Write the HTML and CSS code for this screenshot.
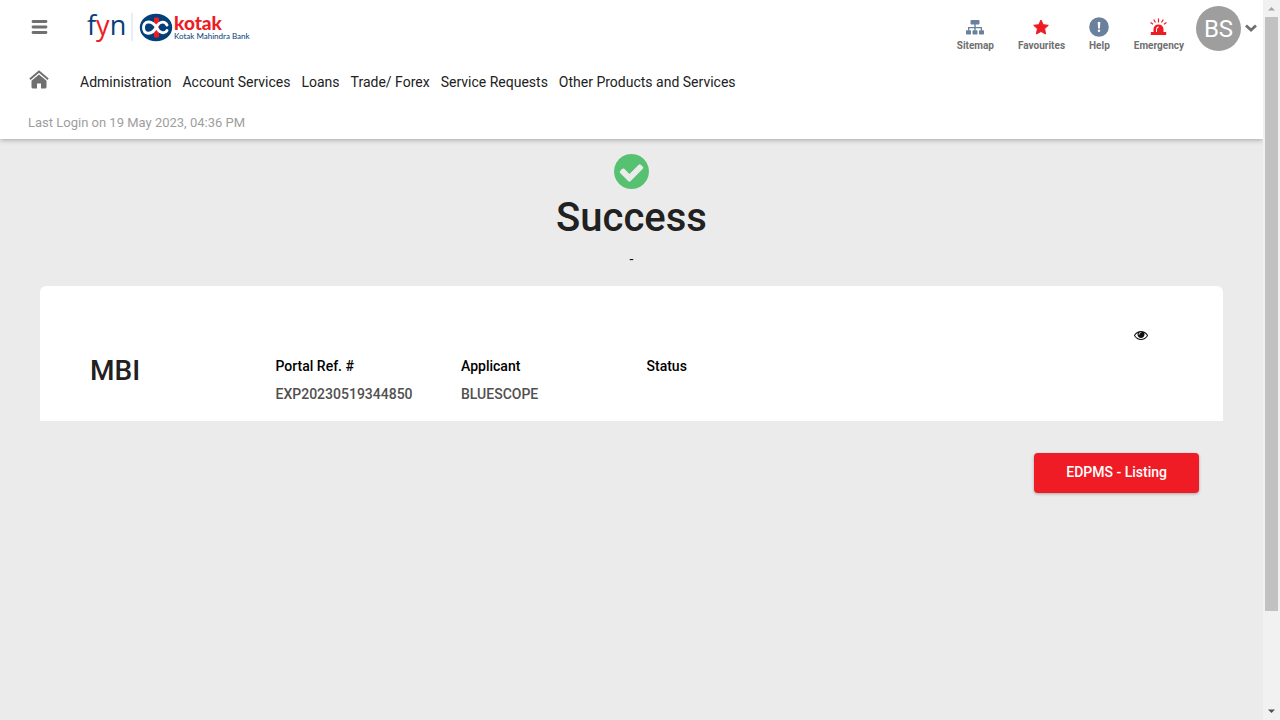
FILE: index.html
```html
<!DOCTYPE html>
<html lang="en">
<head>
<meta charset="utf-8">
<meta name="viewport" content="width=device-width, initial-scale=1">
<title>Success - EDPMS</title>
<link rel="stylesheet" href="styles.css">
</head>
<body>
<div class="shell">
  <div class="page">
    <header class="header">
      <div class="topbar">
        <button class="icon-button menu" type="button" aria-label="Menu">
          <svg width="17" height="14" viewBox="0 0 17 14" stroke="#707070" stroke-width="2.8" stroke-linecap="round"><path d="M2 1.500h13M2 7h13M2 12.500h13"/></svg>
        </button>
        <a class="brand" href="#" aria-label="fyn Kotak Mahindra Bank">
          <svg width="172" height="43" viewBox="0 -3 172 43">
            <text class="fyn" x="0" y="27">f<tspan class="red">y</tspan>n</text>
            <path d="M45 5v28" stroke="#d5d9e8" stroke-width="1"/>
            <ellipse cx="69" cy="19.500" rx="16.200" ry="13.800" fill="#03407a"/>
            <path d="M67 10q2.500-1.500 5 0v19q-2.500 1.500-5 0z" fill="#ed1c24"/>
            <path d="M80 17C78 13 73 13 70 18C67 24 64 25.500 61 25.300C55 24.500 55 14.500 61 14C65 13.500 67.500 16 70 20C72.500 25.500 78 26 80 22.500" fill="none" stroke="#fff" stroke-width="2.900" stroke-linecap="round"/>
            <text class="kotak" x="87" y="22">kotak</text>
            <text class="bank" x="87" y="31">Kotak Mahindra Bank</text>
          </svg>
        </a>
        <div class="tools">
          <a class="tool" href="#">
            <svg width="18" height="20" viewBox="0 0 18 20" fill="#6a819d"><rect x="4.500" y="3" width="9" height="4.500" rx="1"/><path d="M8.300 7h1.400v3H16v3.500h-1.300v-2.200h-5v2.200H8.300v-2.200h-5v2.200H2V10h6.300z"/><rect x="0" y="13.200" width="5" height="4.300" rx=".7"/><rect x="6.500" y="13.200" width="5" height="4.300" rx=".7"/><rect x="13" y="13.200" width="5" height="4.300" rx=".7"/></svg>
            <span>Sitemap</span>
          </a>
          <a class="tool" href="#">
            <svg width="18" height="20" viewBox="0 0 18 20" fill="#ed1c24" stroke="#ed1c24" stroke-linejoin="round"><path d="M9 3l2.200 4.700 5.100.6-3.700 3.500 1 5.200L9 14.500 4.400 17l1-5.200-3.700-3.500 5.100-.6z"/></svg>
            <span>Favourites</span>
          </a>
          <a class="tool" href="#">
            <svg width="20" height="20" viewBox="0 0 20 20"><circle cx="10" cy="10" r="9.800" fill="#6a819d"/><path d="M8.700 5h2.600l-.4 6.500H9.100z" fill="#fff"/><circle cx="10" cy="13.800" r="1.200" fill="#fff"/></svg>
            <span>Help</span>
          </a>
          <a class="tool" href="#">
            <svg width="18" height="20" viewBox="0 0 18 20" fill="#ed1c24"><path d="M3.500 15v-3a5 4.500 0 0 1 10 0v3h2.700v3H.8v-3zM6 15h1v-2.500q0-1.500 1.500-2V9.300Q6 9.800 6 12.500z" fill-rule="evenodd"/><path d="M8.500 1.500v4M3.700 2.500l1.800 3M13.300 2.500l-1.800 3M.5 5.500l2.600 1.800M16.500 5.500l-2.600 1.800" stroke="#ed1c24" stroke-width="1.200"/></svg>
            <span>Emergency</span>
          </a>
          <button class="account" type="button" aria-label="Account menu">
            <span class="avatar">BS</span>
            <svg width="12" height="12" viewBox="0 0 12 12" fill="none" stroke="#707070" stroke-width="2.800"><path d="M1 2.500l5 4.500 5-4.500"/></svg>
          </button>
        </div>
      </div>
      <nav class="nav" aria-label="Main">
        <a class="home" href="#" aria-label="Home">
          <svg width="20" height="19" viewBox="0 0 20 19"><path d="M.9 9.200L10 1.500l9.100 7.700" fill="none" stroke="#707070" stroke-width="2"/><path d="M10 4.500l7.500 6.300V17a1.500 1.500 0 0 1-1.500 1.500h-4v-5H8v5H4A1.500 1.500 0 0 1 2.500 17v-6.200z" fill="#707070"/></svg>
        </a>
        <a href="#">Administration</a>
        <a href="#">Account Services</a>
        <a href="#">Loans</a>
        <a href="#">Trade/ Forex</a>
        <a href="#">Service Requests</a>
        <a href="#">Other Products and Services</a>
      </nav>
      <p class="last-login">Last Login on 19 May 2023, 04:36 PM</p>
    </header>
    <main class="main">
      <section class="result">
        <svg width="35" height="35" viewBox="128 128 1536 1536" fill="#56c271"><path d="M1412 734q0-28-18-46l-91-90q-19-19-45-19t-45 19l-408 407-226-226q-19-19-45-19t-45 19l-91 90q-18 18-18 46 0 27 18 45l362 362q19 19 45 19 27 0 46-19l543-543q18-18 18-45zM1664 896q0 209-103 385.500t-279.500 279.500-385.500 103-385.500-103-279.500-279.500-103-385.500 103-385.500 279.500-279.500 385.500-103 385.500 103 279.500 279.500 103 385.500z"/></svg>
        <h1 class="result-title">Success</h1>
        <p class="result-note">-</p>
      </section>
      <section class="card">
        <button class="icon-button view" type="button" aria-label="View details">
          <svg width="14" height="14" viewBox="0 0 1792 1792" fill="#111"><path d="M1664 960q-152-236-381-353 61 104 61 225 0 185-131.500 316.500t-316.500 131.500-316.500-131.500-131.500-316.500q0-121 61-225-229 117-381 353 133 205 333.500 326.500t434.500 121.500 434.500-121.500 333.500-326.500zM944 576q0-20-14-34t-34-14q-125 0-214.500 89.500t-89.500 214.500q0 20 14 34t34 14 34-14 14-34q0-86 61-147t147-61q20 0 34-14t14-34zM1792 960q0 34-20 69-140 230-376.500 368.500t-499.500 138.500-499.500-139-376.500-368q-20-35-20-69t20-69q140-229 376.500-368t499.500-139 499.500 139 376.500 368q20 35 20 69z"/></svg>
        </button>
        <h2 class="card-title">MBI</h2>
        <dl class="field"><dt>Portal Ref. #</dt><dd>EXP20230519344850</dd></dl>
        <dl class="field"><dt>Applicant</dt><dd>BLUESCOPE</dd></dl>
        <dl class="field"><dt>Status</dt><dd></dd></dl>
      </section>
      <div class="actions">
        <button class="primary" type="button">EDPMS - Listing</button>
      </div>
    </main>
  </div>
  <div class="scrollbar" aria-hidden="true">
    <svg width="17" height="17" viewBox="0 0 17 17"><path d="M5 10.500h7L8.500 7z" fill="#a3a3a3"/></svg>
    <div class="track"><div class="thumb"></div></div>
    <svg width="17" height="17" viewBox="0 0 17 17"><path d="M5 6.500h7L8.500 10z" fill="#505050"/></svg>
  </div>
</div>
</body>
</html>
```
FILE: styles.css
```css
* {
  box-sizing: border-box;
}

body {
  margin: 0;
  background: #ebebeb;
  color: #000;
  font-family: Roboto, "Liberation Sans", sans-serif;
  font-size: 14px;
  line-height: 20px;
}

h1, h2, p, dl, dd {
  margin: 0;
}

a {
  color: inherit;
  text-decoration: none;
}

button {
  border: 0;
  padding: 0;
  background: none;
  font: inherit;
  cursor: pointer;
}

svg {
  display: block;
  flex: none;
}

.shell {
  display: grid;
  grid-template-columns: minmax(0, 1fr) 17px;
  height: 100vh;
}

.page {
  overflow: hidden;
}

.header {
  background: #fff;
  box-shadow: 0 1px 5px rgba(0, 0, 0, 0.3);
}

.topbar {
  display: flex;
  align-items: flex-start;
  padding: 5px 6px 0 31px;
}

.menu {
  padding-top: 15px;
}

.brand {
  padding-left: 39px;
}

.fyn {
  fill: #03407a;
  font: 500 27px "Open Sans", sans-serif;
}

.red {
  fill: #ed1c24;
}

.kotak {
  fill: #ed1c24;
  font: 900 19px Lato, sans-serif;
}

.bank {
  fill: #03407a;
  font: 8px Lato, sans-serif;
}

.tools {
  display: flex;
  gap: 24px;
  margin-left: auto;
}

.tool {
  display: flex;
  flex-direction: column;
  align-items: center;
  gap: 3px;
  padding-top: 12px;
  color: #707070;
  font-size: 10px;
  font-weight: 700;
  line-height: 12px;
}

.account {
  display: flex;
  align-items: center;
  align-self: flex-start;
  gap: 4px;
  margin: 1px 0 0 -12px;
}

.avatar {
  display: grid;
  place-items: center;
  width: 45px;
  height: 45px;
  border-radius: 50%;
  background: #9e9e9e;
  color: #fff;
  font-size: 24px;
}

.nav {
  display: flex;
  align-items: center;
  gap: 11px;
  padding: 18px 29px 0;
  color: #212121;
}

.home {
  padding: 0 20px 5px 0;
}

.last-login {
  padding: 19px 28px 6px;
  color: #9e9e9e;
  font-size: 13px;
}

.main {
  padding: 15px 40px;
}

.result {
  display: flex;
  flex-direction: column;
  align-items: center;
}

.result-title {
  margin-top: 5px;
  color: #212121;
  font-size: 40px;
  font-weight: 500;
  line-height: 48px;
}

.result-note {
  margin-top: 7px;
}

.card {
  display: grid;
  grid-template-columns: repeat(6, minmax(0, 1fr));
  margin-top: 17px;
  padding: 42px 35px 17px;
  border-radius: 6px 6px 0 0;
  background: #fff;
}

.view {
  grid-column: 6;
  justify-self: end;
  margin-right: 40px;
}

.card-title {
  grid-column: 1;
  padding: 15px 15px 0;
  color: #212121;
  font-size: 28px;
  font-weight: 500;
  line-height: 28px;
}

.field {
  display: grid;
  align-content: start;
  gap: 8px;
  padding: 14px 15px 0;
  font-weight: 500;
}

.field dd {
  min-height: 20px;
  color: #505050;
}

.actions {
  display: flex;
  justify-content: flex-end;
  padding: 32px 24px;
}

.primary {
  padding: 9px 32px 11px;
  border-radius: 4px;
  background: #ef1c25;
  box-shadow: 0 1px 3px rgba(0, 0, 0, 0.3);
  color: #fff;
  font-weight: 500;
}

.scrollbar {
  display: flex;
  flex-direction: column;
  background: #f1f1f1;
}

.track {
  flex: 1;
  padding: 0 2px;
}

.thumb {
  height: 86.6%;
  background: #c1c1c1;
}
```
